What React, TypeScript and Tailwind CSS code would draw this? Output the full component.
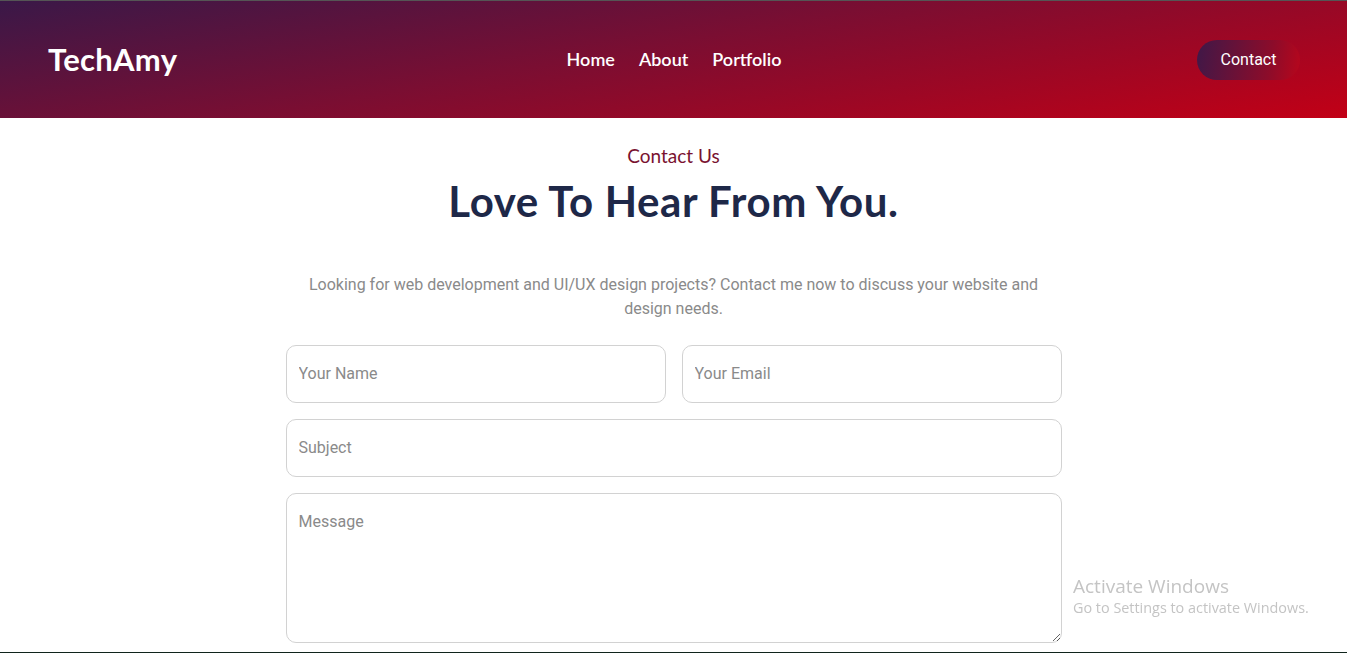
export default function App() {
  const heading = { fontFamily: '"Lato", "Noto Sans", sans-serif' };
  const body = { fontFamily: 'Roboto, "Liberation Sans", sans-serif' };

  return (
    <div className="min-h-screen bg-white relative">
      <header
        className="h-[118px] border-t border-[#555] bg-[linear-gradient(170deg,#3a1848_0%,#7a0e32_45%,#c20016_100%)] grid grid-cols-3 items-center pl-12 pr-[47px]"
        style={heading}
      >
        <div className="text-white text-[31px] font-bold tracking-[0.3px] justify-self-start">TechAmy</div>
        <nav className="flex items-center gap-[24px] text-white text-[18px] font-semibold justify-self-center">
          <a>Home</a>
          <a>About</a>
          <a>Portfolio</a>
        </nav>
        <button
          className="justify-self-end h-10 w-[103px] rounded-full text-white text-[16px] bg-[linear-gradient(100deg,#3f1848_0%,#8c0c2a_70%,#b8061c_100%)]"
          style={body}
        >
          Contact
        </button>
      </header>

      <main className="flex flex-col items-center">
        <p className="mt-[24px] text-[19px] text-[#7a1230]" style={heading}>Contact Us</p>
        <h1 className="mt-[6px] text-[42px] font-bold tracking-[0.6px] text-[#1e2848] leading-[48px]" style={heading}>
          Love To Hear From You.
        </h1>

        <p
          className="mt-[48px] w-[776px] text-center text-[16px] leading-6 text-[#8a8a8a]"
          style={body}
        >
          Looking for web development and UI/UX design projects? Contact me now to discuss your website and design needs.
        </p>

        <form className="mt-[24px] w-[776px] flex flex-col gap-4" style={body}>
          <div className="grid grid-cols-2 gap-4">
            <input
              placeholder="Your Name"
              className="h-[58px] rounded-[10px] border border-[#d2d2d2] px-3 text-[16px] placeholder-[#8a8a8a] outline-none"
            />
            <input
              placeholder="Your Email"
              className="h-[58px] rounded-[10px] border border-[#d2d2d2] px-3 text-[16px] placeholder-[#8a8a8a] outline-none"
            />
          </div>
          <input
            placeholder="Subject"
            className="h-[58px] rounded-[10px] border border-[#d2d2d2] px-3 text-[16px] placeholder-[#8a8a8a] outline-none"
          />
          <textarea
            placeholder="Message"
            className="h-[150px] rounded-[10px] border border-[#d2d2d2] px-3 py-4 text-[16px] placeholder-[#8a8a8a] outline-none"
          />
        </form>
      </main>

      <div
        className="fixed left-[1073px] top-[574px] text-[#c4c4c4] pointer-events-none"
        style={{ fontFamily: '"Open Sans", "Noto Sans", sans-serif' }}
      >
        <div className="text-[19px] leading-6">Activate Windows</div>
        <div className="text-[14.4px] leading-5">Go to Settings to activate Windows.</div>
      </div>
      <div className="fixed left-0 right-0 bottom-0 h-px bg-[#10241c]" />
    </div>
  );
}
